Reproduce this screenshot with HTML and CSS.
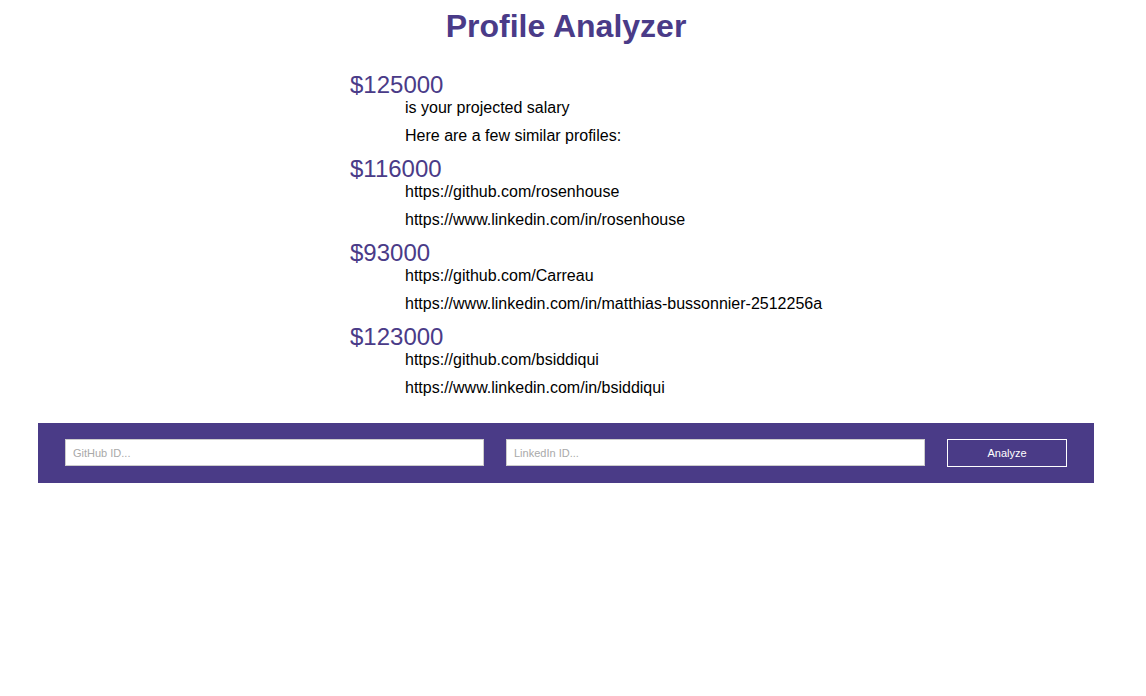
FILE: index.html
```html
<!DOCTYPE html>
<html>
<head>
<meta charset="utf-8">
<title>Profile Analyzer</title>
<link rel="stylesheet" href="styles.css">
</head>
<body>
<div class="page">
  <h1 class="title">Profile Analyzer</h1>
  <div class="results">
    <div class="group">
      <div class="salary">$125000</div>
      <p class="line">is your projected salary</p>
      <p class="line">Here are a few similar profiles:</p>
    </div>
    <div class="group">
      <div class="salary">$116000</div>
      <p class="line">https://github.com/rosenhouse</p>
      <p class="line">https://www.linkedin.com/in/rosenhouse</p>
    </div>
    <div class="group">
      <div class="salary">$93000</div>
      <p class="line">https://github.com/Carreau</p>
      <p class="line">https://www.linkedin.com/in/matthias-bussonnier-2512256a</p>
    </div>
    <div class="group">
      <div class="salary">$123000</div>
      <p class="line">https://github.com/bsiddiqui</p>
      <p class="line">https://www.linkedin.com/in/bsiddiqui</p>
    </div>
  </div>
  <form class="bar">
    <input class="field" type="text" placeholder="GitHub ID...">
    <input class="field" type="text" placeholder="LinkedIn ID...">
    <button class="btn" type="button">Analyze</button>
  </form>
</div>
</body>
</html>
```

FILE: styles.css
```css
html, body {
  margin: 0;
  padding: 0;
  background: #ffffff;
}
body {
  font-family: "Liberation Sans", Arial, sans-serif;
  color: #000000;
}
.page {
  width: 1132px;
  padding-top: 8px;
}
.title {
  margin: 0;
  text-align: center;
  font-size: 32px;
  font-weight: bold;
  line-height: 37px;
  color: #4a3b88;
}
.results {
  width: 432px;
  margin: 26px auto 0;
}
.salary {
  font-size: 24px;
  line-height: 28px;
  color: #4a3b88;
}
.line {
  margin: 0 0 10px 55px;
  font-size: 16px;
  line-height: 18px;
  white-space: nowrap;
}
.bar {
  margin: 26px 38px 0;
  height: 60px;
  background: #4a3b87;
  display: flex;
  align-items: flex-start;
  padding: 16px 27px 0;
  box-sizing: border-box;
  gap: 22px;
}
.field {
  width: 419px;
  height: 27px;
  box-sizing: border-box;
  border: 1px solid #cccccc;
  background: #ffffff;
  padding: 0 7px;
  margin: 0;
  font-family: "Liberation Sans", Arial, sans-serif;
  font-size: 11px;
  outline: none;
}
.field::placeholder {
  color: #a9a9a9;
}
.btn {
  width: 120px;
  height: 28px;
  box-sizing: border-box;
  border: 1px solid #ffffff;
  background: transparent;
  color: #ffffff;
  font-family: "Liberation Sans", Arial, sans-serif;
  font-size: 11px;
  margin: 0;
  padding: 0;
}
```
